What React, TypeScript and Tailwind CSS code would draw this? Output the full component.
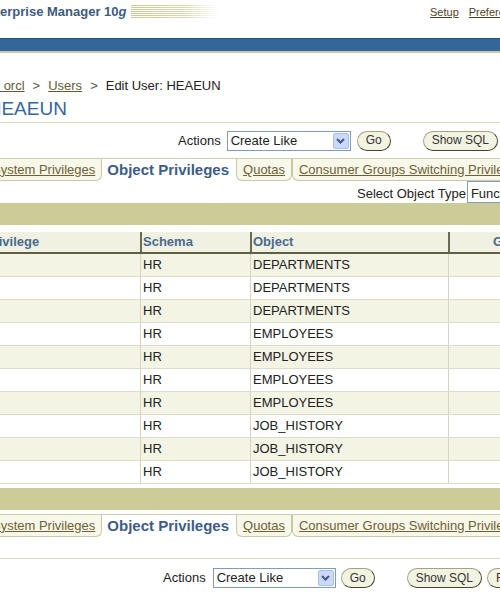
import React from "react";

// Rows of the object privileges table
const ROWS: { schema: string; object: string }[] = [
  { schema: "HR", object: "DEPARTMENTS" },
  { schema: "HR", object: "DEPARTMENTS" },
  { schema: "HR", object: "DEPARTMENTS" },
  { schema: "HR", object: "EMPLOYEES" },
  { schema: "HR", object: "EMPLOYEES" },
  { schema: "HR", object: "EMPLOYEES" },
  { schema: "HR", object: "EMPLOYEES" },
  { schema: "HR", object: "JOB_HISTORY" },
  { schema: "HR", object: "JOB_HISTORY" },
  { schema: "HR", object: "JOB_HISTORY" },
];

function Button({ label, className = "" }: { label: string; className?: string }) {
  return (
    <button
      className={`h-[20px] shrink-0 rounded-full border border-[#a3a384] border-r-[#45452f] border-b-[#45452f] bg-[#f3f3e1] px-[8px] text-[12px] leading-[17px] text-[#333] ${className}`}
    >
      {label}
    </button>
  );
}

function ActionSelect({ className }: { className: string }) {
  return (
    <div
      className={`flex h-[20px] shrink-0 items-center border border-[#7f9db9] bg-white pl-[3px] text-[13px] text-[#222] ${className}`}
    >
      <span>Create Like</span>
      <div className="ml-auto mr-px flex h-[16px] w-[16px] items-center justify-center rounded-[2px] border border-[#a9bfea] bg-[#c9d8fb]">
        <svg width="9" height="6" viewBox="0 0 9 6">
          <path d="M1 1 L4.5 4.5 L8 1" stroke="#44577d" strokeWidth="2" fill="none" />
        </svg>
      </div>
    </div>
  );
}

function InactiveTab({ label }: { label: string }) {
  return (
    <div className="flex h-[22px] shrink-0 items-center rounded-b-[6px] border-x border-b border-[#c9c9a6] bg-[#f7f7ea] px-[6px]">
      <span className="text-[13px] text-[#6f5f33] underline">{label}</span>
    </div>
  );
}

function Tabs() {
  return (
    <div className="flex h-[23px] border-t border-[#cfcfad] whitespace-nowrap">
      <div className="-ml-[15px] flex shrink-0">
        <InactiveTab label="System Privileges" />
        <div className="flex h-[22px] shrink-0 items-center pl-[5px] pr-[7px] text-[15px] font-bold text-[#3d5d85]">
          Object Privileges
        </div>
        <InactiveTab label="Quotas" />
        <InactiveTab label="Consumer Groups Switching Privileges" />
      </div>
    </div>
  );
}

export default function App() {
  return (
    <div className="h-[600px] w-[500px] overflow-hidden bg-white font-['Liberation_Sans',Arial,sans-serif] text-[#222]">
      {/* Header */}
      <div className="flex h-[38px] items-start whitespace-nowrap">
        <div className="-ml-[65px] mt-[4px] flex w-[495px] shrink-0 items-center">
          <span className="text-[13px] font-bold leading-[16px] text-[#3f5b7d]">
            Oracle Enterprise Manager 10<i>g</i>
          </span>
          <svg className="ml-[5px]" width="90" height="14" viewBox="0 0 90 14">
            <defs>
              <linearGradient id="fade" gradientUnits="userSpaceOnUse" x1="0" x2="90" y1="0" y2="0">
                <stop offset="0" stopColor="#cbc796" stopOpacity="1" />
                <stop offset="0.6" stopColor="#d6d3a8" stopOpacity="0.9" />
                <stop offset="1" stopColor="#e8e6cc" stopOpacity="0" />
              </linearGradient>
            </defs>
            {[0.5, 2.5, 4.5, 6.5, 8.5, 10.5, 12.5].map((y) => (
              <line key={y} x1="0" x2="90" y1={y} y2={y} stroke="url(#fade)" strokeWidth="1" />
            ))}
          </svg>
        </div>
        <div className="mt-[4px] flex shrink-0 gap-[10px] text-[11px] leading-[16px] text-[#4e4125]">
          <span className="underline">Setup</span>
          <span className="underline">Preferences</span>
          <span className="underline">Help</span>
          <span className="underline">Logout</span>
        </div>
      </div>

      {/* Blue bar */}
      <div className="h-[13px] border-t border-[#23527f] bg-[#336699]" />
      <div className="h-[2px] bg-[#c9c9a5]" />

      {/* Breadcrumb */}
      <div className="mt-[25px] flex h-[16px] items-center gap-[8px] whitespace-nowrap text-[13px] leading-[16px]">
        <span className="-ml-[112px] shrink-0 text-[#665a3c] underline">Database Instance: orcl</span>
        <span className="shrink-0 text-[#555]">&gt;</span>
        <span className="shrink-0 text-[#665a3c] underline">Users</span>
        <span className="shrink-0 text-[#555]">&gt;</span>
        <span className="shrink-0 text-[#222]">Edit User: HEAEUN</span>
      </div>

      {/* Title */}
      <div className="mt-[4px] flex h-[22px] items-center whitespace-nowrap">
        <span className="-ml-[101px] shrink-0 text-[19px] leading-[22px] text-[#35679a]">
          Edit User: HEAEUN
        </span>
      </div>
      <div className="mt-[2px] h-px bg-[#d7d7b9]" />

      {/* Top actions */}
      <div className="flex h-[35px] items-center whitespace-nowrap pl-[178px]">
        <span className="shrink-0 text-[13px] text-[#222]">Actions</span>
        <ActionSelect className="ml-[6px] w-[124px]" />
        <Button label="Go" className="ml-[6px]" />
        <Button label="Show SQL" className="ml-[32px]" />
        <Button label="Revert" className="ml-[5px]" />
        <Button label="Apply" className="ml-[5px]" />
      </div>

      <Tabs />

      {/* Object type selector */}
      <div className="flex h-[22px] items-start whitespace-nowrap pl-[357px]">
        <span className="mt-[5px] shrink-0 text-[13px] leading-[16px] text-[#222]">Select Object Type</span>
        <div className="ml-px flex h-[22px] w-[130px] shrink-0 items-center border border-[#7f9db9] bg-white pl-[3px] pt-[3px] text-[13px]">
          Function
        </div>
      </div>

      <div className="h-[22px] bg-[#cccc99]" />

      {/* Table */}
      <div className="-ml-[18px] mt-[7px] w-max">
        <div className="flex h-[22px] border-b-2 border-[#5f5f47] bg-[#f1f1e3] text-[13px] font-bold text-[#4a6a8c]">
          <div className="flex w-[158px] items-center px-[3px]">Privilege</div>
          <div className="flex w-[110px] items-center border-l-2 border-[#6b6b55] pl-px">Schema</div>
          <div className="flex w-[198px] items-center border-l-2 border-[#6b6b55] pl-px">Object</div>
          <div className="flex w-[168px] items-center justify-center border-l-2 border-[#6b6b55]">
            Grant Option
          </div>
        </div>
        {ROWS.map((row, i) => (
          <div
            key={i}
            className={`flex h-[23px] border-b border-[#dcdccb] text-[13px] text-[#222] ${
              i % 2 === 0 ? "bg-[#f4f4e5]" : "bg-white"
            }`}
          >
            <div className="w-[158px]" />
            <div className="flex w-[110px] items-center border-l border-[#d4d4c4] pl-[2px]">{row.schema}</div>
            <div className="flex w-[198px] items-center border-l border-[#d4d4c4] pl-[2px]">{row.object}</div>
            <div className="w-[168px] border-l border-[#d4d4c4]" />
          </div>
        ))}
      </div>

      <div className="mt-[4px] h-[22px] bg-[#cccc99]" />

      <div className="mt-[4px]">
        <Tabs />
      </div>

      <div className="mt-[21px] h-px bg-[#d7d7b9]" />

      {/* Bottom actions */}
      <div className="flex h-[38px] items-center whitespace-nowrap pl-[163px]">
        <span className="shrink-0 text-[13px] text-[#222]">Actions</span>
        <ActionSelect className="ml-[7px] w-[123px]" />
        <Button label="Go" className="ml-[5px]" />
        <Button label="Show SQL" className="ml-[32px]" />
        <Button label="Revert" className="ml-[5px]" />
        <Button label="Apply" className="ml-[5px]" />
      </div>
    </div>
  );
}
